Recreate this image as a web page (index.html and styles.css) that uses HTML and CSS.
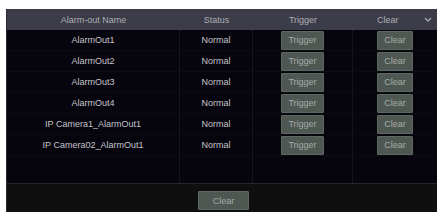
FILE: index.html
```html
<!DOCTYPE html>
<html>
<head>
<meta charset="utf-8">
<link rel="stylesheet" href="styles.css">
</head>
<body>
<div class="panel">
  <div class="head">
    <div class="hc">Alarm-out Name</div>
    <div class="hc">Status</div>
    <div class="hc">Trigger</div>
    <div class="hc last"><span class="hl">Clear</span><svg class="chev" width="8" height="5" viewBox="0 0 8 5"><path d="M1 1 L4 4 L7 1" fill="none" stroke="#a8a8b0" stroke-width="1.3"/></svg></div>
  </div>
  <div class="body">
    <div class="row"><div class="c">AlarmOut1</div><div class="c">Normal</div><div class="c"><span class="btn">Trigger</span></div><div class="c"><span class="btn">Clear</span></div></div>
    <div class="row"><div class="c">AlarmOut2</div><div class="c">Normal</div><div class="c"><span class="btn">Trigger</span></div><div class="c"><span class="btn">Clear</span></div></div>
    <div class="row"><div class="c">AlarmOut3</div><div class="c">Normal</div><div class="c"><span class="btn">Trigger</span></div><div class="c"><span class="btn">Clear</span></div></div>
    <div class="row"><div class="c">AlarmOut4</div><div class="c">Normal</div><div class="c"><span class="btn">Trigger</span></div><div class="c"><span class="btn">Clear</span></div></div>
    <div class="row"><div class="c">IP Camera1_AlarmOut1</div><div class="c">Normal</div><div class="c"><span class="btn">Trigger</span></div><div class="c"><span class="btn">Clear</span></div></div>
    <div class="row"><div class="c">IP Camera02_AlarmOut1</div><div class="c">Normal</div><div class="c"><span class="btn">Trigger</span></div><div class="c"><span class="btn">Clear</span></div></div>
    <div class="row fill"><div class="c"></div><div class="c"></div><div class="c"></div><div class="c"></div></div>
  </div>
  <div class="foot"><span class="btn big">Clear</span></div>
</div>
</body>
</html>
```
FILE: styles.css
```css
html, body {
  margin: 0;
  padding: 0;
  background: #ffffff;
}
body {
  font-family: "Liberation Sans", Arial, sans-serif;
  font-size: 9px;
}
.panel {
  margin: 9px 0 0 7px;
  width: 430px;
  height: 203px;
  background: #06050e;
  display: flex;
  flex-direction: column;
  box-shadow: -1px 0 0 #2c2c33;
}
.head, .row {
  display: grid;
  grid-template-columns: 173px 73px 100px 84px;
}
.head {
  height: 21px;
  background: #3b3c47;
  color: #aeaeb6;
  align-items: center;
}
.hc {
  text-align: center;
}
.hc.last {
  display: flex;
  align-items: center;
  justify-content: space-between;
  padding: 0 5px 0 24px;
}
.chev {
  display: block;
}
.body {
  height: 153px;
  display: flex;
  flex-direction: column;
}
.row {
  height: 21px;
  color: #c4c4ca;
}
.row.fill {
  flex: 1;
  height: auto;
}
.c {
  display: flex;
  align-items: center;
  justify-content: center;
  border-right: 1px solid #161620;
  border-bottom: 1px solid #0b0a15;
}
.c:last-child {
  border-right: none;
}
.fill .c {
  border-bottom: none;
}
.btn {
  display: inline-flex;
  align-items: center;
  justify-content: center;
  height: 17px;
  padding: 0 6px;
  background: #4f5753;
  border: 1px solid #5f6762;
  color: #a4aba7;
  border-radius: 1px;
}
.foot {
  height: 29px;
  background: #0f0f10;
  border-top: 1px solid #262628;
  box-sizing: border-box;
  display: flex;
  justify-content: center;
  align-items: flex-end;
  padding-bottom: 2px;
}
.btn.big {
  width: 51px;
  height: 19px;
  padding: 0;
  box-sizing: border-box;
  margin-left: 3px;
}
```
